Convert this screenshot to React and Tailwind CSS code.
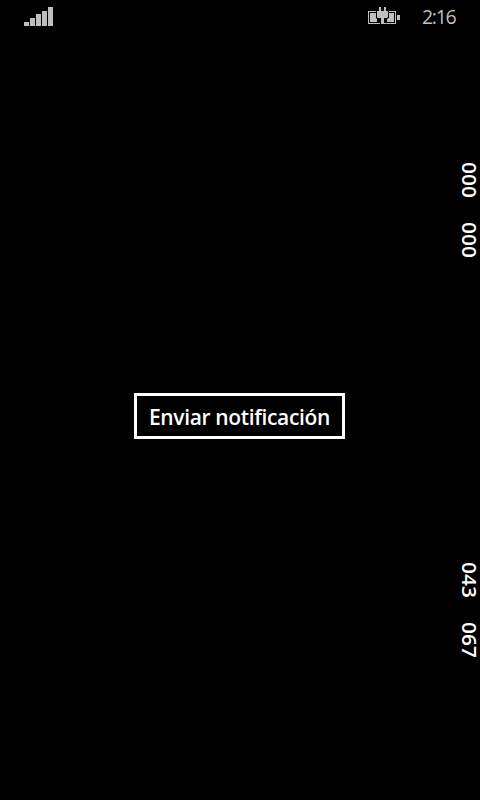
function Signal() {
  return (
    <svg width="29" height="19" viewBox="0 0 29 19" fill="#bfbfbf" shapeRendering="crispEdges">
      <rect x="0" y="15" width="5" height="4" />
      <rect x="6" y="11" width="5" height="8" />
      <rect x="12" y="7" width="5" height="12" />
      <rect x="18" y="4" width="5" height="15" />
      <rect x="24" y="0" width="5" height="19" />
    </svg>
  );
}

function Battery() {
  return (
    <svg width="32" height="17" viewBox="0 0 32 17" fill="#bfbfbf">
      <path d="M0 4H8V5H1V16H12V17H0ZM21 4H28V17H16V16H27V5H21Z" />
      <path d="M2 6H8V11L9 12V15H2ZM21 6H26V15H19V12L21 11Z" />
      <path d="M11 0H13V4H16V0H18V4H20V10L19 11H16V17H13V11H10L9 10V4H11Z" />
      <rect x="29" y="8" width="3" height="5" />
    </svg>
  );
}

function Counter({ values }) {
  return (
    <div className="flex h-24 w-5 flex-col gap-[23px]">
      {values.map((value, i) => (
        <span
          key={i}
          className="h-[37px] w-5 origin-top scale-y-[1.1] whitespace-nowrap text-[19px] leading-5 font-semibold tracking-[0.05px] [writing-mode:vertical-rl]"
        >
          {value}
        </span>
      ))}
    </div>
  );
}

export default function App() {
  return (
    <div className="flex h-[800px] w-[480px] flex-col overflow-hidden bg-black font-['Open_Sans','Noto_Sans',sans-serif] text-white">
      <header className="flex h-8 items-start pt-[7px] pr-[23px] pl-6 text-[#bfbfbf]">
        <Signal />
        <div className="ml-auto mr-[22px]">
          <Battery />
        </div>
        <span className="w-[35px] whitespace-nowrap text-[19.5px] leading-5 font-normal tracking-[-1.3px]">2:16</span>
      </header>
      <main className="flex flex-1">
        <div className="flex flex-1 pt-[361px] pl-[134px]">
          <button className="flex h-[46px] w-[211px] items-center justify-center border-3 border-white pt-[2px] text-[21px] leading-6 font-semibold whitespace-nowrap tracking-[-0.35px]">
            Enviar notificación
          </button>
        </div>
        <aside className="flex w-[21px] flex-col gap-[304px] pt-[130px]">
          <Counter values={["000", "000"]} />
          <Counter values={["043", "067"]} />
        </aside>
      </main>
    </div>
  );
}
